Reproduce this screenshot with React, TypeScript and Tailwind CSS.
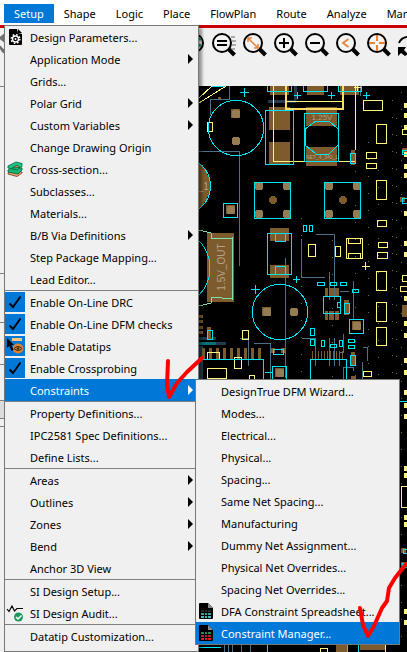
import type { ReactNode } from "react";

type IconName = "gear" | "layers" | "check" | "datatip" | "audit" | "sheet" | "manager";

type MenuItem = {
  label: string;
  icon?: IconName;
  arrow?: boolean;
  checked?: boolean;
  active?: boolean;
};

type Box = [number, number, number, number];
type Point = [number, number];

const menuBar = ["Shape", "Logic", "Place", "FlowPlan", "Route", "Analyze", "Manufacture"];

const setupGroups: MenuItem[][] = [
  [
    { label: "Design Parameters...", icon: "gear" },
    { label: "Application Mode", arrow: true },
    { label: "Grids..." },
    { label: "Polar Grid", arrow: true },
    { label: "Custom Variables", arrow: true },
    { label: "Change Drawing Origin" },
    { label: "Cross-section...", icon: "layers" },
    { label: "Subclasses..." },
    { label: "Materials..." },
    { label: "B/B Via Definitions", arrow: true },
    { label: "Step Package Mapping..." },
    { label: "Lead Editor..." },
  ],
  [
    { label: "Enable On-Line DRC", icon: "check", checked: true },
    { label: "Enable On-Line DFM checks", icon: "check", checked: true },
    { label: "Enable Datatips", icon: "datatip", checked: true },
    { label: "Enable Crossprobing", icon: "check", checked: true },
    { label: "Constraints", arrow: true, active: true },
  ],
  [
    { label: "Property Definitions..." },
    { label: "IPC2581 Spec Definitions..." },
    { label: "Define Lists..." },
  ],
  [
    { label: "Areas", arrow: true },
    { label: "Outlines", arrow: true },
    { label: "Zones", arrow: true },
    { label: "Bend", arrow: true },
    { label: "Anchor 3D View" },
  ],
  [{ label: "SI Design Setup..." }, { label: "SI Design Audit...", icon: "audit" }],
  [{ label: "Datatip Customization..." }],
];

const constraintItems: MenuItem[] = [
  { label: "DesignTrue DFM Wizard..." },
  { label: "Modes..." },
  { label: "Electrical..." },
  { label: "Physical..." },
  { label: "Spacing..." },
  { label: "Same Net Spacing..." },
  { label: "Manufacturing" },
  { label: "Dummy Net Assignment..." },
  { label: "Physical Net Overrides..." },
  { label: "Spacing Net Overrides..." },
  { label: "DFA Constraint Spreadsheet...", icon: "sheet" },
  { label: "Constraint Manager...", icon: "manager", active: true },
];

function Sheet({ colors }: { colors: string[] }) {
  return (
    <svg width="14" height="16" viewBox="0 0 14 16">
      <path d="M1 0h8l5 5v10q0 1-1 1H1q-1 0-1-1V1q0-1 1-1z" fill="#000" />
      <path d="M9 0v5h5z" fill="#8a8a8a" />
      {colors.map((color, i) => (
        <path key={i} d={`M2 ${7 + i * 3}h3v2h-3zM6 ${7 + i * 3}h2v2h-2zM9 ${7 + i * 3}h3v2h-3z`} fill={color} />
      ))}
    </svg>
  );
}

function MenuIcon({ name }: { name: IconName }) {
  if (name === "gear") {
    return (
      <svg width="13" height="16" viewBox="0 0 13 16">
        <path d="M1 0h7l1 4 4 1v10q0 1-1 1H1q-1 0-1-1V1q0-1 1-1z" fill="#000" />
        <path d="M9 0l4 4H9z" fill="#000" />
        <circle cx="6.5" cy="10" r="3" fill="none" stroke="#fff" strokeWidth="1.4" />
        <circle cx="6.5" cy="10" r="4.3" fill="none" stroke="#fff" strokeWidth="1.6" strokeDasharray="1.6 1.78" />
        <circle cx="6.5" cy="10" r="1" fill="#fff" />
      </svg>
    );
  }
  if (name === "layers") {
    return (
      <svg width="16" height="16" viewBox="0 0 16 16" strokeWidth="0.8">
        <path d="M1 12l5-3 9 2v1l-5 3.500-9-2.500z" fill="#f0a070" stroke="#6b3a20" />
        <path d="M1 9l5-3 9 1v2l-4 4-10-2z" fill="#12b877" stroke="#075a3a" />
        <path d="M1 5l8-4 6 1.500v3l-5 3.500-9-2z" fill="#18c984" stroke="#075a3a" />
        <path d="M5 7l5-3 3 2.500z" fill="#d48a4d" stroke="#075a3a" />
      </svg>
    );
  }
  if (name === "check") {
    return (
      <svg width="14" height="14" viewBox="0 0 14 14">
        <path d="M1.500 8.500L5 12L12.500 1.500" fill="none" stroke="#000" strokeWidth="1.900" />
      </svg>
    );
  }
  if (name === "datatip") {
    return (
      <svg width="18" height="18" viewBox="0 0 18 18">
        <path d="M6 1h10v3H6z" fill="#f3c98b" />
        <ellipse cx="12" cy="11.500" rx="5.500" ry="5" fill="#d8823a" />
        <path d="M8 11.500q4-4 8 0-4 4-8 0z" fill="#d8823a" stroke="#3a2a18" />
        <circle cx="12" cy="11.500" r="1.300" fill="#3a2a18" />
        <path d="M1 1l7 7H5.500l2 5-2 1-2-5L1 11z" fill="#000" />
      </svg>
    );
  }
  if (name === "audit") {
    return (
      <svg width="18" height="18" viewBox="0 0 18 18">
        <path d="M1 5l2 2.500L6 2l2.500 5L11 4.500h6" fill="none" stroke="#000" strokeWidth="1.200" />
        <circle cx="12.500" cy="13" r="4.500" fill="#1c9a5e" />
        <path d="M10 13l2 2 3.500-3.500" fill="none" stroke="#fff" strokeWidth="1.500" />
      </svg>
    );
  }
  if (name === "sheet") return <Sheet colors={["#1d2b2e", "#3f9a9a", "#49b8b8"]} />;
  return <Sheet colors={["#2f8a4a", "#b02020", "#e01818"]} />;
}

function MenuRow({ item, children }: { item: MenuItem; children?: ReactNode }) {
  return (
    <li className="relative">
      <button
        type="button"
        className={`flex h-[22px] w-full items-center text-left ${
          item.active ? "bg-[#0078d7] text-white" : "text-black"
        }`}
      >
        <span
          className={`mr-[5px] flex h-5 w-5 shrink-0 items-center justify-center ${
            item.checked ? "bg-[#0078d7]" : ""
          }`}
        >
          {item.icon && <MenuIcon name={item.icon} />}
        </span>
        <span className="grow whitespace-nowrap pt-0.5">{item.label}</span>
        {item.arrow && (
          <svg width="5" height="10" viewBox="0 0 5 10" className="mr-[5px]">
            <path d="M0 0l5 5-5 5z" fill="currentColor" />
          </svg>
        )}
      </button>
      {children}
    </li>
  );
}

function SetupMenu() {
  return (
    <div className="absolute left-0 top-[21px] h-[calc(100vh-25px)] w-[195px] border border-[#777] bg-[#f0f0f0] shadow-[3px_3px_3px_rgba(0,0,0,0.4)]">
      {setupGroups.map((group, i) => (
        <ul key={i} className={i > 0 ? "border-t border-[#808080]" : ""}>
          {group.map((item) => (
            <MenuRow key={item.label} item={item}>
              {item.active && (
                <ul className="absolute left-[190px] top-0 w-[205px] border border-[#777] bg-[#f0f0f0]">
                  {constraintItems.map((sub) => (
                    <MenuRow key={sub.label} item={sub} />
                  ))}
                </ul>
              )}
            </MenuRow>
          ))}
        </ul>
      ))}
    </div>
  );
}

function Magnifier({ label, children }: { label: string; children: ReactNode }) {
  return (
    <button type="button" aria-label={label} className="shrink-0">
      <svg width="26" height="26" viewBox="0 0 26 26" fill="none">
        <circle cx="11" cy="11" r="9" fill="#f4f4f4" stroke="#000" strokeWidth="2" />
        <path d="M17.500 17l6 6" stroke="#000" strokeWidth="4" />
        {children}
      </svg>
    </button>
  );
}

function Toolbar() {
  return (
    <div className="flex h-[58px] items-start gap-[5px] overflow-hidden bg-[#f0f0f0] pt-1">
      <div className="w-[175px] shrink-0">
        <svg width="26" height="26" viewBox="0 0 26 26">
          <path d="M0 6l5-4v8zM0 14q2 8 10 8" fill="#707070" stroke="#707070" strokeWidth="2" />
        </svg>
      </div>
      <button type="button" aria-label="Zoom world" className="shrink-0">
        <svg width="26" height="26" viewBox="0 0 26 26" fill="none">
          <circle cx="14" cy="11" r="9" fill="#f4f4f4" stroke="#000" strokeWidth="2" />
          <path d="M14 7h7M15 11l6 3M14 16h5" stroke="#1a9a68" strokeWidth="3" />
        </svg>
      </button>
      <Magnifier label="Zoom list">
        <path d="M6 9h10M6 13h10" stroke="#000" strokeWidth="2" />
        <path d="M20 5h4M21 9h4M21 13h4M20 17h4" stroke="#666" />
      </Magnifier>
      <Magnifier label="Zoom fit">
        <path d="M7 7l8 8M6 10V6h4M16 12v4h-4" stroke="#e8843a" strokeWidth="1.500" />
      </Magnifier>
      <Magnifier label="Zoom in">
        <path d="M6 11h10M11 6v10" stroke="#000" strokeWidth="2" />
      </Magnifier>
      <Magnifier label="Zoom out">
        <path d="M6 11h10" stroke="#000" strokeWidth="2" />
      </Magnifier>
      <Magnifier label="Zoom previous">
        <path d="M13.500 7L8 11l5.500 4" stroke="#e8843a" strokeWidth="1.800" />
      </Magnifier>
      <Magnifier label="Zoom center">
        <path d="M3 11h6M13 11h6M11 3v6M11 13v6" stroke="#e8843a" strokeWidth="2" />
      </Magnifier>
      <button type="button" aria-label="Redraw" className="shrink-0">
        <svg width="26" height="26" viewBox="0 0 26 26">
          <path d="M2 11a10 9 0 0 1 19 0" fill="none" stroke="#000" strokeWidth="2" />
          <path d="M1 15h8l-2 3 4 4-3 2-4-3-3 3z" fill="#000" />
        </svg>
      </button>
    </div>
  );
}

const pads: Box[] = [
  [218, 97, 3, 3], [270, 86, 19, 9], [307, 86, 17, 9], [340, 86, 19, 9],
  [269, 107, 21, 23], [269, 142, 21, 22], [306, 107, 31, 19], [306, 147, 31, 19],
  [351, 150, 4, 15], [226, 205, 9, 9], [231, 109, 9, 9], [207, 233, 27, 69],
  [270, 228, 19, 13], [270, 265, 19, 13], [262, 307, 9, 9],
  [325, 288, 3, 9], [329, 288, 5, 9], [335, 288, 4, 9],
  [325, 311, 3, 9], [329, 311, 5, 9], [335, 311, 4, 9],
  [344, 300, 5, 15], [352, 321, 9, 9], [351, 352, 4, 13], [207, 327, 4, 13],
  [271, 348, 4, 5], [281, 348, 4, 5], [275, 368, 9, 9], [351, 376, 5, 4],
  [199, 315, 4, 3], [199, 320, 4, 3], [199, 326, 4, 3], [199, 331, 4, 3],
  [402, 148, 5, 5], [400, 197, 5, 5], [402, 305, 5, 12], [401, 548, 5, 5], [401, 562, 5, 5],
  [336, 645, 12, 7], [360, 645, 25, 5],
];

const cyanBoxes: Box[] = [
  [267, 80, 24, 11], [303, 80, 24, 11], [338, 80, 23, 11],
  [265, 110, 28, 54], [304, 113, 34, 48], [350, 153, 5, 10], [223, 203, 14, 14],
  [254, 182, 36, 36], [324, 182, 36, 36], [303, 225, 3, 6], [309, 225, 3, 6],
  [267, 233, 24, 41], [275, 233, 10, 8], [275, 266, 10, 8],
  [317, 282, 7, 3], [330, 282, 6, 3], [340, 282, 6, 3], [352, 289, 6, 3],
  [323, 296, 17, 17], [337, 302, 3, 5], [344, 303, 5, 10], [349, 319, 14, 14],
  [310, 328, 4, 7], [310, 339, 4, 6], [321, 340, 3, 6], [339, 340, 3, 6],
  [330, 344, 6, 3], [348, 339, 6, 3], [348, 345, 6, 3], [350, 355, 5, 10],
  [207, 330, 5, 9], [273, 349, 10, 5], [272, 366, 14, 14],
  [402, 150, 6, 4], [402, 198, 6, 5], [403, 549, 6, 4], [402, 563, 6, 4],
];

const yellowBoxes: Box[] = [
  [207, 122, 5, 9], [363, 100, 19, 10], [376, 124, 10, 19], [366, 152, 10, 6], [366, 163, 10, 5],
  [376, 180, 10, 19], [377, 220, 9, 6], [308, 244, 7, 12], [335, 246, 5, 10],
  [346, 238, 16, 20], [348, 238, 12, 5], [348, 253, 12, 5],
  [378, 242, 9, 5], [377, 252, 10, 6], [376, 271, 10, 19], [376, 302, 10, 19], [376, 327, 10, 18],
  [363, 371, 8, 5], [207, 352, 12, 7], [207, 368, 19, 10], [234, 357, 7, 11],
  [242, 330, 6, 9], [249, 375, 5, 5], [402, 129, 6, 5], [402, 275, 6, 6], [400, 286, 7, 5],
  [401, 486, 8, 21], [320, 648, 7, 6],
];

const roundPads: Point[] = [
  [236, 141], [236, 114], [231, 210], [259, 186], [287, 186], [259, 214], [287, 214],
  [329, 186], [357, 186], [329, 214], [357, 214], [294, 312], [267, 312], [357, 326], [280, 373],
];

const edgeTicks = [
  103, 113, 125, 152, 164, 173, 211, 241, 252, 296, 321, 333, 358, 370, 390, 403, 414, 466, 473, 515, 522, 609, 620,
];

function Board() {
  return (
    <svg
      className="h-full w-full bg-black"
      viewBox="4 86 403 566"
      preserveAspectRatio="xMinYMin slice"
      fill="none"
      shapeRendering="crispEdges"
    >
      <g stroke="#6d6d38" strokeDasharray="1 16">
        <path d="M301.500 218V400M332.500 240V400M355.500 120V400M368.500 142V380M378.500 170V380M392.500 100V380M396.500 118V380M401.500 92V650" />
      </g>
      <g fill="#223a4b">
        <path d="M268 100h28v3h-28zM294 86h3v14h-3zM199 337h17v3h-17zM199 342h27v3h-27zM199 346h4v34h-4z" />
        <path d="M199 342h17v3h-17z" fill="#087078" />
      </g>
      <g fill="#7d5b2c">
        <circle cx="182" cy="186" r="28" />
        {pads.map(([x, y, w, h], i) => (
          <rect key={i} x={x} y={y} width={w} height={h} />
        ))}
        <path d="M202 348h3v12h-3zM209 348h3v12h-3zM216 348h3v12h-3zM223 348h3v12h-3zM230 348h3v12h-3zM237 348h3v12h-3zM244 348h3v12h-3zM251 348h3v12h-3zM258 348h3v12h-3z" />
        <circle cx="273" cy="200" r="4" />
        <circle cx="343" cy="200" r="4" />
      </g>
      <path d="M312 355h33" stroke="#7d5b2c" strokeWidth="8" strokeDasharray="1 2" />
      <g fill="#957c52">
        {roundPads.map(([x, y], i) => (
          <circle key={i} cx={x} cy={y} r="4.500" />
        ))}
      </g>
      <g stroke="#4b7189">
        <path d="M210.500 115V99.500H229.500V86M198 151.500H239.500V266M285.500 258V378M301.500 239V277.500H325M316 234.500H334.500V300M329.500 272V300M340 291.500H349M353.500 281V319M360.500 86v10" />
        <path d="M240 338.500H248.500V366M254 343.500H270.500V379M302 338.500H315.500V366M329.500 338V366M334.500 338V366M343.500 334V352.500H339.500V366M343.500 379V367.500H353.500V371M362.500 379V362M363 347.500H367.500V361M224.500 644v8M228.500 644v8M232.500 644v8M241.500 644v8M250.500 644v8" />
      </g>
      <g stroke="#fff27e">
        <path d="M199 103L226 86M199 98L212 86M273.500 86V161.500H356M355.500 86V150M286 101.500H343M361.500 266.500h8M365.500 262v8M354 87.500h7M357.500 86v5M385.500 644v8" />
        <path d="M286 86V108.500H343V86" strokeWidth="2" stroke="#ffd96a" />
        {yellowBoxes.map(([x, y, w, h], i) => (
          <rect key={i} x={x + 0.5} y={y + 0.5} width={w} height={h} />
        ))}
      </g>
      <g fill="#fff27e">
        {edgeTicks.map((y) => (
          <rect key={y} x="404" y={y} width="3" height="5" />
        ))}
      </g>
      <g stroke="#00e5f5">
        <circle cx="236" cy="128" r="27.700" />
        <circle cx="280" cy="312" r="27.700" />
        <circle cx="182" cy="186" r="28.500" />
        <circle cx="171" cy="268" r="39" />
        {cyanBoxes.map(([x, y, w, h], i) => (
          <rect key={i} x={x + 0.5} y={y + 0.5} width={w} height={h} />
        ))}
        <path d="M316 121H329L338 129V145L329 154H316L305 145V129z" />
        <path d="M240 92.500h9M244.500 88v9M294 95.500h7M297.500 92v7M328 95.500h7M331.500 92v7M363 95.500h7M366.500 92v7M251 289.500h9M255.500 285v9M293 279.500h7M296.500 276v7" />
        <path d="M212 86.500H225M198 359.500H263.500V380M310.500 380V359.500H346.500V380M265 372.500H272M400 401H407M198 647.500H221M267.500 644v8M347.500 644v8M358.500 644v8" />
      </g>
      <path d="M199 230L211 233V239L232 238V299L211 297V303L199 306" stroke="#7fe0b0" />
      <g fill="#b5a084" fontFamily="Liberation Sans, sans-serif" textAnchor="middle">
        <text x="322" y="120" fontSize="8">1.25V</text>
        <text x="322" y="159" fontSize="5">NET_4_340_1</text>
        <text x="200" y="190" fontSize="10">S_1</text>
        <text x="221" y="271" fontSize="10" transform="rotate(-90 221 267)">1.5V_OUT</text>
      </g>
    </svg>
  );
}

function RedMarks() {
  return (
    <svg
      className="pointer-events-none absolute left-0 top-0 z-30"
      width="407"
      height="652"
      viewBox="0 0 407 652"
      fill="none"
      stroke="#ff0000"
      strokeWidth="4"
      strokeLinecap="round"
      strokeLinejoin="round"
    >
      <path d="M168 361L167 385L169 397L177 383L187 372L202 358" />
      <path d="M360 608L363 625L368 636L374 626L382 608L387 601L389 588L395 578L406 564" />
    </svg>
  );
}

export default function App() {
  return (
    <div className="relative flex h-screen flex-col overflow-hidden bg-[#f0f0f0] font-['Noto_Sans','Open_Sans',sans-serif] text-[11px] leading-4 text-black">
      <header className="relative z-20 flex h-[25px] shrink-0 items-start bg-white pl-1 pt-1">
        <div className="relative">
          <button type="button" className="flex h-[19px] items-center bg-[#0078d7] px-[10px] text-white">
            Setup
          </button>
          <SetupMenu />
        </div>
        {menuBar.map((label) => (
          <button key={label} type="button" className="flex h-[19px] items-center px-[10px]">
            {label}
          </button>
        ))}
      </header>
      <div className="h-[3px] shrink-0 bg-[#cc0000]" />
      <Toolbar />
      <div className="flex min-h-0 grow">
        <aside className="w-1 shrink-0 border-t border-[#808080]">
          <div className="h-[187px] border-b border-[#808080]" />
          <div className="h-[49px] border-b border-[#808080]" />
          <div className="h-[42px] border-b border-[#808080]" />
          <div className="h-[36px] border-b border-[#808080]" />
          <div className="h-[18px] border-b border-[#808080] bg-[#dcdcdc]" />
          <div className="h-2 border-b border-[#808080]" />
        </aside>
        <main className="min-w-0 grow">
          <Board />
        </main>
      </div>
      <RedMarks />
    </div>
  );
}
